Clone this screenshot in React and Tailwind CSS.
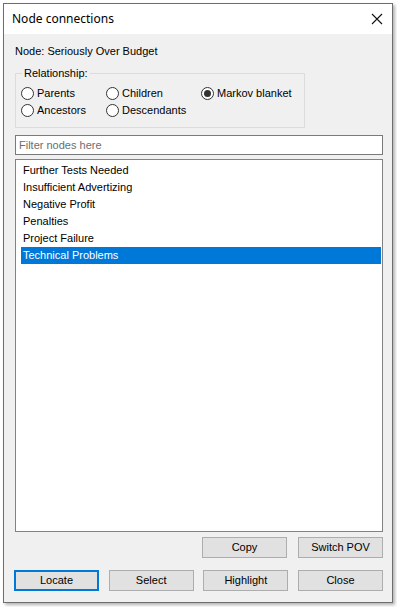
import { useState } from "react";

const nodes = [
  "Further Tests Needed",
  "Insufficient Advertizing",
  "Negative Profit",
  "Penalties",
  "Project Failure",
  "Technical Problems",
];

function Radio({ label, checked }) {
  return (
    <label className="flex h-[17px] items-center gap-[3px]">
      <span className="flex h-[13px] w-[13px] items-center justify-center rounded-full border border-[#333333] bg-white">
        {checked && <span className="h-[7px] w-[7px] rounded-full bg-[#333333]" />}
      </span>
      <span>{label}</span>
    </label>
  );
}

function Btn({ children, focused }) {
  return (
    <button
      className={
        "flex h-[21px] w-[85px] items-center justify-center bg-[#e1e1e1] text-[11px] text-black " +
        (focused ? "border-2 border-[#0078d7]" : "border border-[#adadad]")
      }
    >
      {children}
    </button>
  );
}

export default function App() {
  const [selected, setSelected] = useState("Technical Problems");

  return (
    <div
      className="h-[607px] w-[397px] bg-white pl-[3px] pt-[3px]"
      style={{ fontFamily: '"Liberation Sans", Arial, sans-serif' }}
    >
      <div className="flex h-[600px] w-[390px] flex-col border border-[#6e6e6e] bg-[#f0f0f0] shadow-[2px_2px_3px_rgba(0,0,0,0.3)]">
        {/* Title bar */}
        <div className="flex h-[30px] items-center justify-between bg-white pl-[8px] pr-[8px]">
          <span
            className="text-[12px] text-black"
            style={{ fontFamily: '"Noto Sans", "Open Sans", sans-serif' }}
          >
            Node connections
          </span>
          <svg width="12" height="12" viewBox="0 0 12 12" className="mr-[1px]">
            <path d="M1 1 L11 11 M11 1 L1 11" stroke="#111" strokeWidth="1.1" />
          </svg>
        </div>

        <div className="flex flex-1 flex-col pl-[11px] pr-[9px] text-[11px] leading-[13px] text-black">
          <div className="mt-[11px]">Node: Seriously Over Budget</div>

          {/* Relationship group */}
          <div className="relative mt-[15px] h-[55px] w-[290px] border border-[#dcdcdc]">
            <span className="absolute left-[6px] top-[-7px] bg-[#f0f0f0] px-[2px]">
              Relationship:
            </span>
            <div className="flex pl-[5px] pt-[11px]">
              <div className="w-[85px]">
                <Radio label="Parents" />
                <Radio label="Ancestors" />
              </div>
              <div className="w-[95px]">
                <Radio label="Children" />
                <Radio label="Descendants" />
              </div>
              <div>
                <Radio label="Markov blanket" checked />
              </div>
            </div>
          </div>

          {/* Filter */}
          <div className="mt-[7px] flex h-[20px] items-center border border-[#7a7a7a] bg-white pl-[3px] text-[#6d6d6d]">
            Filter nodes here
          </div>

          {/* List */}
          <div className="mt-[4px] h-[373px] border border-[#828282] bg-white pl-[5px] pr-[1px] pt-[2px]">
            {nodes.map((n) => (
              <div
                key={n}
                onClick={() => setSelected(n)}
                className={
                  "flex h-[17px] items-center pl-[2px] " +
                  (selected === n ? "bg-[#0078d7] text-white" : "text-black")
                }
              >
                {n}
              </div>
            ))}
          </div>

          {/* Buttons */}
          <div className="mt-[5px] flex justify-end gap-[11px]">
            <Btn>Copy</Btn>
            <Btn>Switch POV</Btn>
          </div>
          <div className="-ml-[1px] mt-[12px] flex justify-between">
            <Btn focused>Locate</Btn>
            <Btn>Select</Btn>
            <Btn>Highlight</Btn>
            <Btn>Close</Btn>
          </div>
        </div>
      </div>
    </div>
  );
}
